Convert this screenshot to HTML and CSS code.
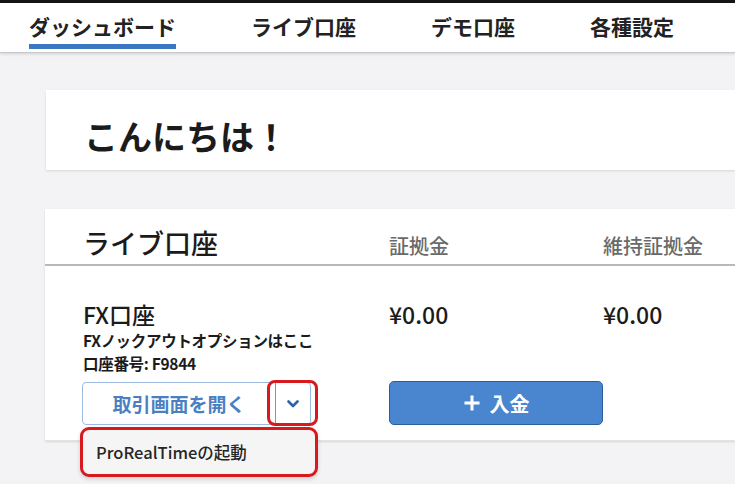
FILE: index.html
```html
<!DOCTYPE html>
<html lang="ja">
<head>
    <meta charset="UTF-8">
    <meta name="viewport" content="width=device-width, initial-scale=1.0">
    <title>ダッシュボード</title>
    <link rel="stylesheet" href="styles.css">
</head>
<body>
    <div class="topbar"></div>

    <!-- Main tabs -->
    <nav class="tabs">
        <a class="tab active">ダッシュボード</a>
        <a class="tab">ライブ口座</a>
        <a class="tab">デモ口座</a>
        <a class="tab">各種設定</a>
    </nav>

    <main class="content">
        <section class="card greeting">
            <h1>こんにちは！</h1>
        </section>

        <section class="card accounts">
            <div class="accounts-head">
                <h2>ライブ口座</h2>
                <span class="col-label">証拠金</span>
                <span class="col-label">維持証拠金</span>
            </div>

            <div class="accounts-body">
                <div class="account-info">
                    <p class="account-name">FX口座</p>
                    <p class="account-sub">FXノックアウトオプションはここ</p>
                    <p class="account-sub">口座番号: F9844</p>
                </div>
                <p class="amount">¥0.00</p>
                <p class="amount">¥0.00</p>

                <!-- Split button with dropdown -->
                <div class="split">
                    <button class="split-main">取引画面を開く</button>
                    <button class="split-toggle">
                        <svg width="12" height="8" viewBox="0 0 12 8"><polyline points="1.5,1.5 6,6 10.5,1.5" fill="none" stroke="#2d63a6" stroke-width="2.6" stroke-linecap="round" stroke-linejoin="round"/></svg>
                    </button>
                    <span class="mark mark-toggle"></span>
                    <div class="dropdown mark">ProRealTimeの起動</div>
                </div>

                <button class="btn-deposit">
                    <svg width="18" height="18" viewBox="0 0 18 18"><path d="M9 1.5v15M1.5 9h15" stroke="#fff" stroke-width="3"/></svg>
                    入金
                </button>
            </div>
        </section>
    </main>
</body>
</html>
```

FILE: styles.css
```css
body {
    margin: 0;
    background-color: #f3f3f5;
    font-family: "Noto Sans CJK JP", "Noto Sans", sans-serif;
    color: #1b1b1b;
}

p, h1, h2 {
    margin: 0;
}

.topbar {
    height: 3px;
    background-color: #151515;
}

/* Tabs */
.tabs {
    display: flex;
    gap: 75px;
    padding-left: 29px;
    height: 49px;
    background-color: #fff;
    border-bottom: 1px solid #c9c9c9;
    box-shadow: 0 1px 3px rgba(0, 0, 0, 0.15);
}

.tab {
    padding-top: 11px;
    padding-bottom: 6px;
    border-bottom: 5px solid transparent;
    font-size: 21px;
    line-height: 24px;
    font-weight: 600;
    color: #222;
    height: 24px;
}

.tab.active {
    border-bottom-color: #3b78c2;
}

/* Cards */
.content {
    padding-left: 46px;
    padding-top: 37px;
    overflow: hidden;
    height: 432px;
    box-sizing: border-box;
}

.card {
    background-color: #fff;
    box-shadow: 0 1px 2px rgba(0, 0, 0, 0.12);
}

.greeting {
    height: 80px;
    box-sizing: border-box;
    padding: 22px 38px 0;
}

.greeting h1 {
    font-size: 34px;
    line-height: 48px;
    font-weight: 700;
}

.accounts {
    margin-top: 39px;
    margin-left: -1px;
}

.accounts-head,
.accounts-body {
    display: grid;
    grid-template-columns: 306px 214px 1fr;
    padding-left: 38px;
}

.accounts-head {
    align-items: baseline;
    height: 57px;
    box-sizing: border-box;
    padding-top: 17px;
    border-bottom: 2px solid #b9b9b9;
}

.accounts-head h2 {
    font-size: 27px;
    line-height: 34px;
    font-weight: 500;
}

.col-label {
    font-size: 20px;
    color: #6a6a6a;
    font-weight: 500;
}

.accounts-body {
    padding-top: 33px;
    padding-bottom: 15px;
    row-gap: 7px;
    border-bottom: 1px solid #e3e3e3;
}

.account-name {
    font-size: 23px;
    line-height: 30px;
    font-weight: 500;
}

.account-sub {
    font-size: 15.5px;
    line-height: 23px;
    font-weight: 700;
    letter-spacing: -0.3px;
}

.amount {
    font-size: 23px;
    line-height: 30px;
    font-weight: 500;
}

/* Split button */
.split {
    position: relative;
    z-index: 2;
    display: flex;
    width: 229px;
    height: 43px;
    border: 1px solid #9dbbe2;
    border-radius: 4px;
    box-sizing: border-box;
    margin-left: -1px;
}

.split button {
    background: none;
    border: none;
    font-family: inherit;
    padding: 0;
}

.split-main {
    flex: 1;
    font-size: 19px;
    font-weight: 600;
    color: #4a80c2;
    padding-left: 4px;
}

.split-toggle {
    width: 35px;
    border-left: 1px solid #6e9bd3 !important;
    display: flex;
    align-items: center;
    justify-content: center;
}

.mark {
    position: absolute;
    border: 3px solid #d8191d;
    box-sizing: border-box;
}

.mark-toggle {
    left: 184px;
    top: -3px;
    width: 51px;
    height: 46px;
    border-radius: 8px;
}

.dropdown {
    left: -3px;
    top: 44px;
    width: 238px;
    height: 50px;
    border-radius: 9px;
    background-color: #f5f5f5;
    box-shadow: 0 2px 4px rgba(0, 0, 0, 0.15);
    padding-left: 13px;
    font-size: 16.5px;
    font-weight: 500;
    line-height: 44px;
    color: #262626;
}

/* Deposit button */
.btn-deposit {
    width: 214px;
    height: 44px;
    margin-top: -1px;
    background-color: #4a86cf;
    border: 1px solid #2b5d9b;
    border-radius: 5px;
    color: #fff;
    font-family: inherit;
    font-size: 20px;
    font-weight: 700;
    display: flex;
    align-items: center;
    justify-content: center;
    gap: 9px;
}
```
